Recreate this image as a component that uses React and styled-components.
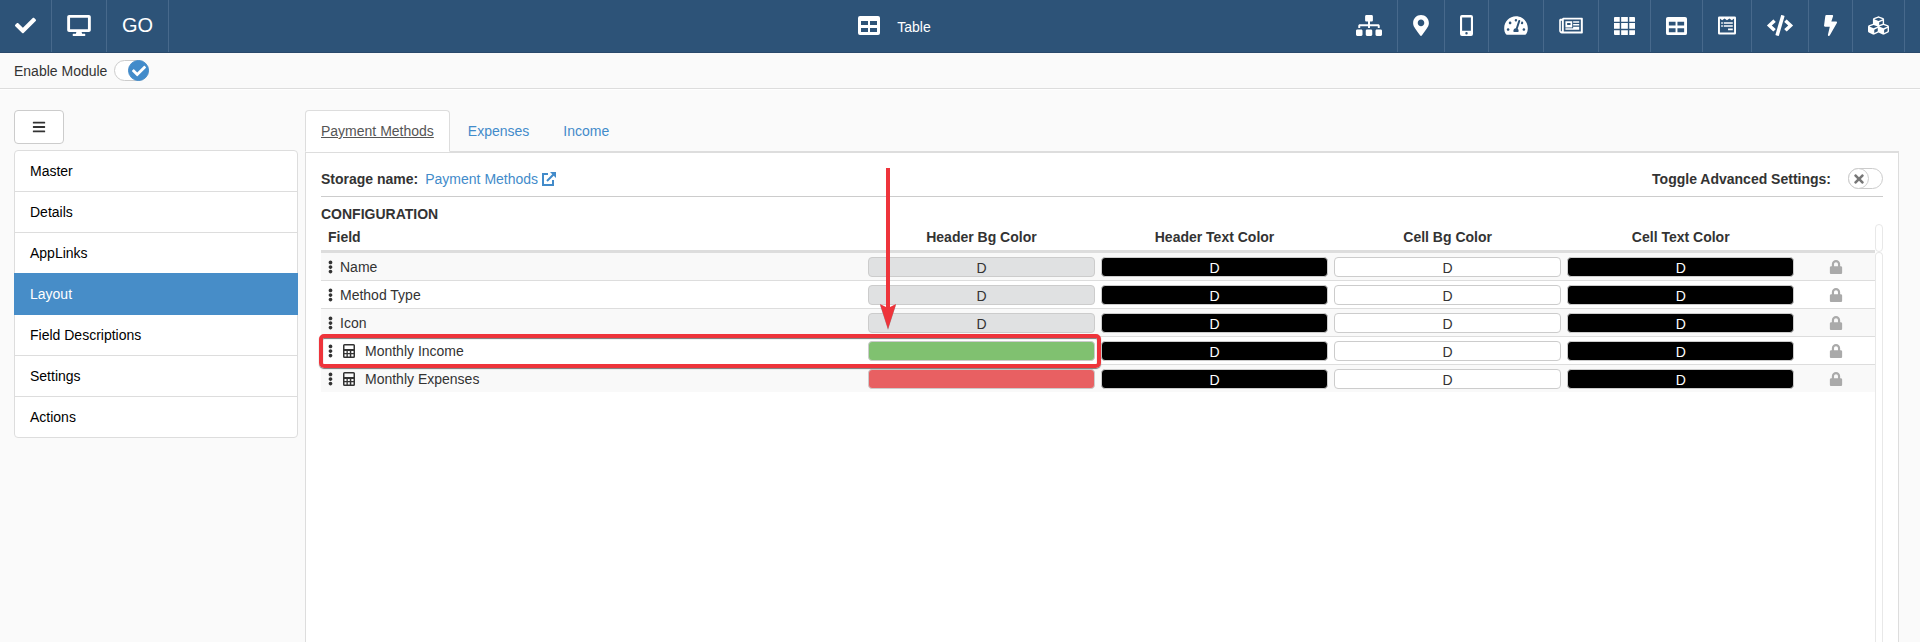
import { useState } from "react";
import styled, { createGlobalStyle } from "styled-components";
import {
    FaBars,
    FaBolt,
    FaCheck,
    FaCode,
    FaCubes,
    FaEllipsisV,
    FaLock,
    FaMapMarkerAlt,
    FaSitemap,
    FaTachometerAlt,
    FaTimes,
} from "react-icons/fa";

const GlobalStyle = createGlobalStyle`
    * {
        box-sizing: border-box;
    }

    body {
        margin: 0;
        background: #fafafa;
        color: #333;
        font: 14px/20px "Liberation Sans", Arial, sans-serif;
    }

    button, input {
        font: inherit;
        color: inherit;
    }

    a {
        color: #428bca;
        text-decoration: none;
    }
`

const Page = styled.div`
    display: flex;
    flex-direction: column;
    min-height: 100vh;
`

const TopBar = styled.header`
    display: flex;
    height: 53px;
    background: #2d5378;
    border-bottom: 1px solid #29496b;
    color: white;
`

const BarGroup = styled.nav`
    display: flex;
    min-width: ${(props) => (props.$start ? "448px" : "0")};
    padding-right: ${(props) => (props.$start ? "0" : "15px")};
`

const BarButton = styled.button`
    display: flex;
    align-items: center;
    padding: 0 15px 2px;
    border: 0;
    border-right: 1px solid #47698c;
    background: none;
    font-size: 20px;
    cursor: pointer;

    svg {
        width: ${(props) => props.$width || 21}px;
        height: 21px;
    }
`

const BarTitle = styled.div`
    display: flex;
    flex: 1;
    align-items: center;
    justify-content: center;
    gap: 17px;
    padding-bottom: 2px;

    svg {
        width: 22px;
        height: 22px;
    }

    span {
        padding-top: 4px;
    }
`

const ModuleBar = styled.div`
    display: flex;
    align-items: center;
    height: 36px;
    padding: 0 14px;
    border-bottom: 1px solid #ddd;
    box-shadow: 0 1px 0 white;
`

const SwitchLabel = styled.label`
    display: flex;
    align-items: center;
    gap: ${(props) => (props.$bold ? "17px" : "7px")};
    font-weight: ${(props) => (props.$bold ? "bold" : "normal")};
    cursor: pointer;
`

const SwitchTrack = styled.span`
    display: flex;
    justify-content: ${(props) => (props.$on ? "flex-end" : "flex-start")};
    width: 35px;
    height: 21px;
    border: 1px solid #ccc;
    border-radius: 11px;
    background: white;

    input {
        position: absolute;
        opacity: 0;
        margin: 0;
    }
`

const SwitchKnob = styled.span`
    display: flex;
    align-items: center;
    justify-content: center;
    width: 21px;
    height: 21px;
    margin: -1px;
    border: 1px solid ${(props) => (props.$on ? "#428bca" : "#ccc")};
    border-radius: 50%;
    background: ${(props) => (props.$on ? "#428bca" : "white")};
    color: ${(props) => (props.$on ? "white" : "#777")};
    font-size: 14px;
`

const Content = styled.div`
    display: grid;
    flex: 1;
    grid-template-columns: 284px minmax(0, 1fr);
    gap: 7px;
    padding: 21px 21px 0 14px;
`

const MenuButton = styled.button`
    display: flex;
    align-items: center;
    justify-content: center;
    width: 50px;
    height: 34px;
    border: 1px solid #ccc;
    border-radius: 4px;
    background: white;
    cursor: pointer;
`

const MenuList = styled.nav`
    margin-top: 6px;
    border: 1px solid #ddd;
    border-radius: 4px;
    background: white;
`

const MenuLink = styled.a`
    display: block;
    margin: ${(props) => (props.$active ? "-1px -1px 0" : "0")};
    padding: ${(props) => (props.$active ? "11px 16px" : "10px 15px")};
    border-bottom: ${(props) => (props.$active ? "0" : "1px solid #ddd")};
    background: ${(props) => (props.$active ? "#478dc8" : "none")};
    color: ${(props) => (props.$active ? "white" : "black")};

    &:last-child {
        border-bottom: 0;
    }
`

const Main = styled.main`
    display: flex;
    flex-direction: column;
`

const Tabs = styled.div`
    display: flex;
    gap: 2px;
    border-bottom: 1px solid #ddd;
`

const Tab = styled.a`
    margin-bottom: -1px;
    padding: 10px 15px;
    border: 1px solid ${(props) => (props.$active ? "#ddd" : "transparent")};
    border-bottom-color: ${(props) => (props.$active ? "white" : "#ddd")};
    border-radius: 4px 4px 0 0;
    background: ${(props) => (props.$active ? "white" : "none")};
    color: ${(props) => (props.$active ? "#555" : "#428bca")};
    text-decoration: ${(props) => (props.$active ? "underline" : "none")};
`

const Panel = styled.section`
    display: flex;
    flex: 1;
    flex-direction: column;
    padding: 0 15px;
    border: 1px solid #ddd;
    border-bottom: 0;
    background: white;
`

const StorageRow = styled.div`
    display: flex;
    align-items: center;
    justify-content: space-between;
    height: 44px;
    padding-top: 8px;
    border-bottom: 1px solid #ccc;
`

const StorageName = styled.div`
    display: flex;
    gap: 7px;

    a {
        display: flex;
        align-items: center;
        gap: 4px;
    }
`

const Heading = styled.h2`
    margin: 7px 0 0;
    font-size: 14px;
    line-height: 20px;
`

const TableArea = styled.div`
    display: grid;
    flex: 1;
    grid-template-columns: minmax(0, 1fr) 8px;
`

const FieldTable = styled.table`
    width: 100%;
    table-layout: fixed;
    border-spacing: 0;
    align-self: start;

    th {
        height: 29px;
        padding: 0;
        border-bottom: 3px solid #ddd;
    }

    th:first-child {
        width: 35%;
        padding-left: 7px;
        text-align: left;
    }

    th:last-child {
        width: 5%;
    }

    tbody tr {
        position: relative;
    }

    tbody tr:nth-child(odd) {
        background: #f9f9f9;
    }

    td {
        height: 28px;
        padding: 4px 3px 3px;
        border-bottom: 1px solid #ddd;
    }

    tbody tr:last-child td {
        height: 27px;
        border-bottom: 0;
    }
`

const Row = styled.tr`
    z-index: ${(props) => (props.$marked ? 1 : 0)};
`

const FieldName = styled.div`
    display: flex;
    align-items: center;
    gap: 7px;
    padding-left: 4px;
`

const DragHandle = styled(FaEllipsisV)`
    width: 5px;
    height: 14px;
`

const Swatch = styled.button`
    display: block;
    width: 100%;
    height: 20px;
    padding: 2px 0 0;
    border: 1px solid #ccc;
    border-radius: 4px;
    background: ${(props) => props.$color};
    color: ${(props) => (props.$color === "black" ? "white" : "#333")};
    line-height: 16px;
    cursor: pointer;
`

const LockButton = styled.button`
    display: flex;
    margin: 0 auto;
    padding: 0;
    border: 0;
    background: none;
    color: #aaa;
    font-size: 14px;
    cursor: pointer;
`

const ScrollGutter = styled.div`
    display: flex;
    flex-direction: column;
`

const GutterBox = styled.div`
    flex: ${(props) => (props.$fill ? "1" : "0 0 28px")};
    border: 1px solid #e8e8e8;
    border-bottom-width: ${(props) => (props.$fill ? "0" : "1px")};
    border-radius: ${(props) => (props.$fill ? "4px 4px 0 0" : "4px")};
`

const Highlight = styled.div`
    position: absolute;
    top: -3px;
    left: -2px;
    width: calc(50% + 5px);
    height: 34px;
    border: 4px solid #ee343b;
    border-radius: 5px;
    box-shadow: 0 1px 1px #777, inset 0 1px 1px #777;
    pointer-events: none;
`

const Arrow = styled.svg`
    position: absolute;
    bottom: calc(100% + 8px);
    left: calc(35% + 15px);
    width: 16px;
    height: 161px;
    fill: #ee343b;
    filter: drop-shadow(0 1px 0 #999);
    pointer-events: none;
`

const CalculatorSvg = styled.svg`
    width: 12px;
    height: 14px;
    margin: 0 3px;
    fill: #333;
`

const MonitorIcon = () => (
    <svg viewBox="0 0 576 512" fill="currentColor">
        <path d="M528 0H48C21.500 0 0 21.500 0 48v320c0 26.500 21.500 48 48 48h176l-12 42h-52c-18 0-27 12-27 27s9 27 27 27h256c18 0 27-12 27-27s-9-27-27-27h-52l-12-42h176c26.500 0 48-21.500 48-48V48c0-26.500-21.500-48-48-48zM506 350H70V64h436z" />
    </svg>
)

const MobileIcon = () => (
    <svg viewBox="0 0 320 512" fill="currentColor">
        <path fillRule="evenodd" d="M48 0h224a48 48 0 0 1 48 48v416a48 48 0 0 1-48 48H48a48 48 0 0 1-48-48V48A48 48 0 0 1 48 0zm4 60v328h216V60zm108 356a30 30 0 1 0 0 60 30 30 0 1 0 0-60z" />
    </svg>
)

const NewsIcon = () => (
    <svg viewBox="0 0 576 512" fill="currentColor">
        <path fillRule="evenodd" d="M552 64H112c-20 0-37 11-45 28H36c-20 0-36 16-36 36v256c0 36 28 64 64 64h488c14 0 24-10 24-24V88c0-14-10-24-24-24zM66 384a13 13 0 0 1-26 0V140h26zm462 16H112V112h416z" />
        <path fillRule="evenodd" d="M152 152h166v150H152zm42 42v48h82v-48zM340 152h148v38H340zM340 220h148v38H340zM340 288h148v38H340zM152 322h336v38H152z" />
    </svg>
)

const TableIcon = () => (
    <svg viewBox="0 0 22 22" fill="currentColor">
        <path fillRule="evenodd" d="M2 2h18a2 2 0 0 1 2 2v15a2 2 0 0 1-2 2H2a2 2 0 0 1-2-2V4a2 2 0 0 1 2-2zm1 5v4h7V7zm9 0v4h7V7zM3 14v4h7v-4zm9 0v4h7v-4z" />
    </svg>
)

const GridIcon = () => (
    <svg viewBox="0 0 22 22" fill="currentColor">
        <path d="M1 2h5v5H0V3a1 1 0 0 1 1-1zM7.500 2h7v5h-7zM16 2h5a1 1 0 0 1 1 1v4h-6zM0 8.500h6v6H0zM7.500 8.500h7v6h-7zM16 8.500h6v6h-6zM0 16h6v5H1a1 1 0 0 1-1-1zM7.500 16h7v5h-7zM16 16h6v4a1 1 0 0 1-1 1h-5z" />
    </svg>
)

const FormIcon = () => (
    <svg viewBox="0 0 448 512" fill="currentColor">
        <path fillRule="evenodd" d="M32 32h384a32 32 0 0 1 32 32v384a32 32 0 0 1-32 32H32a32 32 0 0 1-32-32V64a32 32 0 0 1 32-32zm16 48v352h352V80l-56 48-60-48-60 48-60-48-60 48z" />
        <path d="M80 176h40v38H80zM144 176h224v38H144zM80 248h40v38H80zM144 248h224v38H144zM250 330h118v46H250z" />
    </svg>
)

const CalculatorIcon = () => (
    <CalculatorSvg viewBox="0 0 12 14">
        <path fillRule="evenodd" d="M1.500 0h9A1.500 1.500 0 0 1 12 1.500v11a1.500 1.500 0 0 1-1.500 1.500h-9A1.500 1.500 0 0 1 0 12.500v-11A1.500 1.500 0 0 1 1.500 0zm0 1.500V5h9V1.500zM1.500 7v2h2V7zm3.300 0v2h2V7zm3.500 0v2h2.200V7zM1.500 10.300v2.200h2v-2.200zm3.300 0v2.200h2v-2.200zm3.500 0v2.200h2.200v-2.200z" />
    </CalculatorSvg>
)

const ExternalIcon = () => (
    <svg width="14" height="14" viewBox="0 0 14 14" fill="none" stroke="currentColor" strokeWidth="2">
        <path d="M6 2H1v11h10V8M5 9l7-7" />
        <path d="M8 0h6v6z" fill="currentColor" stroke="none" />
    </svg>
)

const tools = [
    { name: "Sitemap", Icon: FaSitemap, width: 26 },
    { name: "Map", Icon: FaMapMarkerAlt, width: 16 },
    { name: "Mobile", Icon: MobileIcon, width: 13 },
    { name: "Dashboard", Icon: FaTachometerAlt, width: 24 },
    { name: "News", Icon: NewsIcon, width: 24 },
    { name: "Grid", Icon: GridIcon, width: 21 },
    { name: "Table", Icon: TableIcon, width: 21 },
    { name: "Form", Icon: FormIcon, width: 18 },
    { name: "Code", Icon: FaCode, width: 26 },
    { name: "Actions", Icon: FaBolt, width: 13 },
    { name: "Modules", Icon: FaCubes, width: 21 },
]

const menu = ["Master", "Details", "AppLinks", "Layout", "Field Descriptions", "Settings", "Actions"]

const columns = ["Header Bg Color", "Header Text Color", "Cell Bg Color", "Cell Text Color"]

const fields = [
    { name: "Name" },
    { name: "Method Type" },
    { name: "Icon" },
    { name: "Monthly Income", calculated: true, color: "#80c170", marked: true },
    { name: "Monthly Expenses", calculated: true, color: "#e86062" },
]

const Switch = ({ label, bold, initial }) => {
    const [on, setOn] = useState(initial)
    return (
        <SwitchLabel $bold={bold}>
            {label}
            <SwitchTrack $on={on}>
                <input type="checkbox" checked={on} onChange={() => setOn(!on)} />
                <SwitchKnob $on={on}>{on ? <FaCheck /> : <FaTimes />}</SwitchKnob>
            </SwitchTrack>
        </SwitchLabel>
    )
}

const FieldRow = ({ field }) => (
    <Row $marked={field.marked}>
        <td>
            <FieldName>
                <DragHandle />
                {field.calculated && <CalculatorIcon />}
                <span>{field.name}</span>
            </FieldName>
            {field.marked && (
                <>
                    <Highlight />
                    <Arrow viewBox="0 0 16 161">
                        <path d="M6 0h4v139l6-3-8 25-8-25 6 3z" />
                    </Arrow>
                </>
            )}
        </td>
        <td><Swatch $color={field.color || "#e0e1e2"} aria-label="Header Bg Color">{field.color ? "" : "D"}</Swatch></td>
        <td><Swatch $color="black">D</Swatch></td>
        <td><Swatch $color="white">D</Swatch></td>
        <td><Swatch $color="black">D</Swatch></td>
        <td><LockButton aria-label="Lock"><FaLock /></LockButton></td>
    </Row>
)

const App = () => {
    return (
        <Page>
            <GlobalStyle />
            <TopBar>
                <BarGroup $start>
                    <BarButton aria-label="Save"><FaCheck /></BarButton>
                    <BarButton aria-label="Preview" $width={24}><MonitorIcon /></BarButton>
                    <BarButton>GO</BarButton>
                </BarGroup>
                <BarTitle>
                    <TableIcon />
                    <span>Table</span>
                </BarTitle>
                <BarGroup>
                    {tools.map(({ name, Icon, width }) => (
                        <BarButton key={name} aria-label={name} $width={width}><Icon /></BarButton>
                    ))}
                </BarGroup>
            </TopBar>
            <ModuleBar>
                <Switch label="Enable Module" initial={true} />
            </ModuleBar>
            <Content>
                <aside>
                    <MenuButton aria-label="Menu"><FaBars /></MenuButton>
                    <MenuList>
                        {menu.map((item) => (
                            <MenuLink key={item} href="#" $active={item === "Layout"}>{item}</MenuLink>
                        ))}
                    </MenuList>
                </aside>
                <Main>
                    <Tabs>
                        <Tab href="#" $active>Payment Methods</Tab>
                        <Tab href="#">Expenses</Tab>
                        <Tab href="#">Income</Tab>
                    </Tabs>
                    <Panel>
                        <StorageRow>
                            <StorageName>
                                <b>Storage name:</b>
                                <a href="#">Payment Methods <ExternalIcon /></a>
                            </StorageName>
                            <Switch label="Toggle Advanced Settings:" bold initial={false} />
                        </StorageRow>
                        <Heading>CONFIGURATION</Heading>
                        <TableArea>
                            <FieldTable>
                                <thead>
                                    <tr>
                                        <th>Field</th>
                                        {columns.map((column) => <th key={column}>{column}</th>)}
                                        <th></th>
                                    </tr>
                                </thead>
                                <tbody>
                                    {fields.map((field) => <FieldRow key={field.name} field={field} />)}
                                </tbody>
                            </FieldTable>
                            <ScrollGutter>
                                <GutterBox />
                                <GutterBox $fill />
                            </ScrollGutter>
                        </TableArea>
                    </Panel>
                </Main>
            </Content>
        </Page>
    )
}

export default App;
